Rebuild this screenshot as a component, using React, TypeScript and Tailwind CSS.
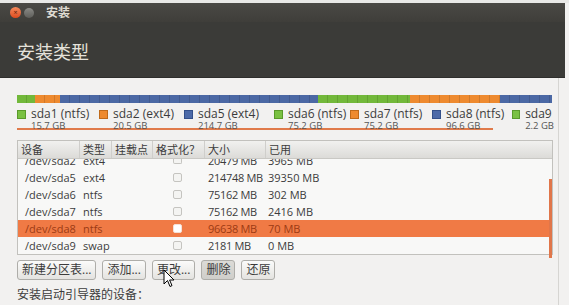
import React from "react";

const font = { fontFamily: '"Open Sans", "Noto Sans", "Noto Sans CJK SC", sans-serif' };

const legend = [
  { name: "sda1 (ntfs)", size: "15.7 GB", color: "bg-[#7ac142]", border: "border-[#5a9a2a]", w: "w-[82px]" },
  { name: "sda2 (ext4)", size: "20.5 GB", color: "bg-[#ee8a2f]", border: "border-[#c06a1a]", w: "w-[85px]" },
  { name: "sda5 (ext4)", size: "214.7 GB", color: "bg-[#4d6aa8]", border: "border-[#34508a]", w: "w-[90px]" },
  { name: "sda6 (ntfs)", size: "75.2 GB", color: "bg-[#7ac142]", border: "border-[#5a9a2a]", w: "w-[76px]" },
  { name: "sda7 (ntfs)", size: "75.2 GB", color: "bg-[#ee8a2f]", border: "border-[#c06a1a]", w: "w-[82px]" },
  { name: "sda8 (ntfs)", size: "96.6 GB", color: "bg-[#4d6aa8]", border: "border-[#34508a]", w: "w-[80px]" },
  { name: "sda9", size: "2.2 GB", color: "bg-[#7ac142]", border: "border-[#5a9a2a]", w: "w-[42px]" },
];

const rows = [
  { dev: "/dev/sda5", type: "ext4", size: "214748 MB", used: "39350 MB" },
  { dev: "/dev/sda6", type: "ntfs", size: "75162 MB", used: "302 MB" },
  { dev: "/dev/sda7", type: "ntfs", size: "75162 MB", used: "2416 MB" },
  { dev: "/dev/sda8", type: "ntfs", size: "96638 MB", used: "70 MB", sel: true },
  { dev: "/dev/sda9", type: "swap", size: "2181 MB", used: "0 MB" },
];

const cols = "grid grid-cols-[62px_32px_41px_52px_61px_1fr]";

const stripe =
  "bg-[repeating-linear-gradient(90deg,transparent_0px,transparent_9px,rgba(0,0,0,0.12)_9px,rgba(0,0,0,0.12)_10px)]";

function Btn({ label, pressed }: { label: string; pressed?: boolean }) {
  return (
    <div
      className={
        "h-[20px] px-[4px] flex items-center rounded-[3px] border border-[#aeada9] text-[12px] text-[#3c3c3c] " +
        (pressed
          ? "bg-gradient-to-b from-[#dcdbd7] to-[#cfceca]"
          : "bg-gradient-to-b from-[#fbfbfa] to-[#e4e3e0]")
      }
    >
      {label}
    </div>
  );
}

function Check({ sel }: { sel?: boolean }) {
  return (
    <div className="flex pl-[20px]">
      <div
        className={
          "w-[9px] h-[9px] rounded-[2px] border " +
          (sel ? "bg-white border-[#f5e0d5]" : "border-[#c5c4c0] bg-[#f4f4f2]")
        }
      />
    </div>
  );
}

function Partial({ text, cls }: { text: string; cls: string }) {
  return (
    <div className={"h-[10px] overflow-hidden whitespace-nowrap " + cls}>
      <div className="-mt-[7px] leading-[17px]">{text}</div>
    </div>
  );
}

export default function App() {
  return (
    <div className="w-[569px] h-[305px] overflow-hidden bg-[#f2f1f0] relative" style={font}>
      <div className="h-[3px] bg-[#e9e9e7]" />
      {/* title bar */}
      <div className="h-[19px] bg-gradient-to-b from-[#4a4945] to-[#3f3e3a] flex items-center pl-[10px] mr-[4px]">
        <div className="w-[11px] h-[11px] rounded-full bg-gradient-to-b from-[#f58a5c] to-[#dd4a1c] flex items-center justify-center">
          <span className="text-[7px] leading-none text-[#5a1a05]">×</span>
        </div>
        <div className="w-[10px] h-[10px] rounded-full bg-gradient-to-b from-[#8a8a86] to-[#5e5e5a] ml-[3px]" />
        <span className="ml-[12px] text-[12px] font-bold text-[#dfdbd2]">安装</span>
      </div>
      {/* header */}
      <div className="h-[56px] bg-[#3b3b38] mr-[4px] pl-[17px] pt-[19px] border-b border-[#2e2e2c]">
        <span className="text-[18px] leading-[22px] text-[#e4e1da]">安装类型</span>
      </div>
      {/* body */}
      <div className="w-[559px] border-r border-[#d6d5d2] h-[230px] pl-[17px] pt-[17px] relative">
        {/* partition bar */}
        <div className="w-[535px] h-[8px] flex overflow-hidden">
          <div className={"w-[18px] bg-[#72b83a] " + stripe} />
          <div className={"w-[25px] bg-[#ee8a2f] " + stripe} />
          <div className={"w-[258px] bg-[#4b68a4] " + stripe} />
          <div className={"w-[92px] bg-[#72b83a] " + stripe} />
          <div className={"w-[90px] bg-[#ee8a2f] " + stripe} />
          <div className={"flex-1 bg-[#4b68a4] " + stripe} />
        </div>
        {/* legend */}
        <div className="flex mt-[4px]">
          {legend.map((l) => (
            <div key={l.name} className={"flex shrink-0 " + l.w}>
              <div className={"w-[9px] h-[9px] mt-[3px] border " + l.color + " " + l.border} />
              <div className="ml-[5px]">
                <div className="text-[12px] leading-[14px] font-medium text-[#3c3c3c] whitespace-nowrap">{l.name}</div>
                <div className="text-[9.5px] leading-[10px] text-[#555] whitespace-nowrap">{l.size}</div>
              </div>
            </div>
          ))}
        </div>
        <div className="w-[476px] h-[2px] bg-[#e07a4a] -mt-[3px]" />
        {/* table */}
        <div className="w-[536px] mt-[10px] border border-[#c2c1bd] bg-[#f8f8f7] relative text-[11px] text-[#3c3c3c]">
          <div className={"h-[18px] bg-gradient-to-b from-[#f1f1ef] to-[#dcdbd8] border-b border-[#c9c8c4] " + cols}>
            {["设备", "类型", "挂载点", "格式化？", "大小", "已用"].map((h, i) => (
              <div
                key={h}
                className={"pl-[3px] leading-[18px] whitespace-nowrap overflow-hidden " + (i < 5 ? "border-r border-[#cfcecb]" : "")}
              >
                {h}
              </div>
            ))}
          </div>
          {/* partially scrolled-out row */}
          <div className={"h-[10px] " + cols}>
            <Partial text="/dev/sda2" cls="pl-[7px]" />
            <Partial text="ext4" cls="pl-[3px]" />
            <div />
            <div className="flex pl-[20px]"><div className="w-[9px] h-[5px] rounded-b-[2px] border border-t-0 border-[#c5c4c0] bg-[#f4f4f2]" /></div>
            <Partial text="20479 MB" cls="pl-[3px] tracking-[-0.3px]" />
            <Partial text="3965 MB" cls="pl-[2px]" />
          </div>
          {rows.map((r) => (
            <div
              key={r.dev}
              className={
                "h-[17px] items-center leading-[17px] " + cols + " " +
                (r.sel ? "bg-[#f07a45] text-[#9c3a14]" : "")
              }
            >
              <div className="pl-[7px] whitespace-nowrap">{r.dev}</div>
              <div className="pl-[3px]">{r.type}</div>
              <div />
              <Check sel={r.sel} />
              <div className="pl-[3px] tracking-[-0.3px] whitespace-nowrap">{r.size}</div>
              <div className="pl-[2px] whitespace-nowrap">{r.used}</div>
            </div>
          ))}
          <div className="absolute right-[0px] top-[38px] -bottom-[4px] w-[3px] bg-[#e0764a]" />
        </div>
        {/* buttons */}
        <div className="flex gap-[6px] mt-[5px]">
          <Btn label="新建分区表..." />
          <Btn label="添加..." />
          <Btn label="更改..." />
          <Btn label="删除" pressed />
          <Btn label="还原" />
        </div>
        <div className="mt-[6px] text-[12px] text-[#3c3c3c]">安装启动引导器的设备：</div>
        {/* cursor */}
        <svg className="absolute left-[163px] top-[191px]" width="12" height="19" viewBox="0 0 12 19">
          <path d="M1 1 L1 15 L4.5 11.5 L7 17.5 L9 16.6 L6.6 11 L11 11 Z" fill="white" stroke="black" strokeWidth="1" strokeLinejoin="round" />
        </svg>
      </div>
    </div>
  );
}
